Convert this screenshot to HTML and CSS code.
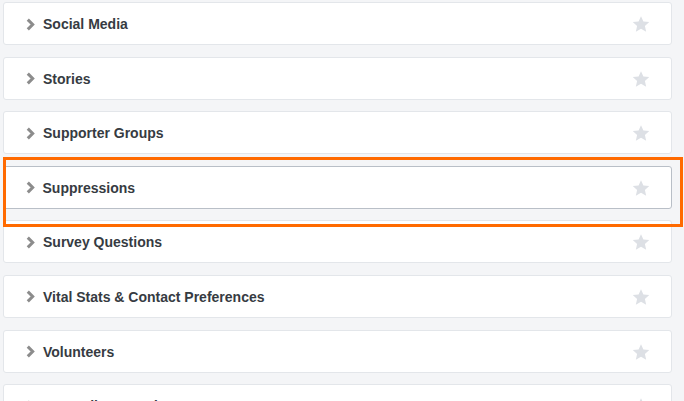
FILE: index.html
```html
<!DOCTYPE html>
<html>
<head>
<meta charset="utf-8">
<link rel="stylesheet" href="styles.css">
</head>
<body>
<div class="list">
  <div class="card"><svg class="chev" viewBox="0 0 8 12"><polyline points="1.5,1.5 6,6 1.5,10.5"/></svg><span class="label">Social Media</span><svg class="star" viewBox="0 0 24 24"><path d="M12 1.5l3.2 7.1 7.8.8-5.8 5.2 1.7 7.7L12 18.4l-6.9 3.9 1.7-7.7L1 9.4l7.8-.8z"/></svg></div>
  <div class="card"><svg class="chev" viewBox="0 0 8 12"><polyline points="1.5,1.5 6,6 1.5,10.5"/></svg><span class="label">Stories</span><svg class="star" viewBox="0 0 24 24"><path d="M12 1.5l3.2 7.1 7.8.8-5.8 5.2 1.7 7.7L12 18.4l-6.9 3.9 1.7-7.7L1 9.4l7.8-.8z"/></svg></div>
  <div class="card"><svg class="chev" viewBox="0 0 8 12"><polyline points="1.5,1.5 6,6 1.5,10.5"/></svg><span class="label">Supporter Groups</span><svg class="star" viewBox="0 0 24 24"><path d="M12 1.5l3.2 7.1 7.8.8-5.8 5.2 1.7 7.7L12 18.4l-6.9 3.9 1.7-7.7L1 9.4l7.8-.8z"/></svg></div>
  <div class="card selected"><svg class="chev" viewBox="0 0 8 12"><polyline points="1.5,1.5 6,6 1.5,10.5"/></svg><span class="label">Suppressions</span><svg class="star" viewBox="0 0 24 24"><path d="M12 1.5l3.2 7.1 7.8.8-5.8 5.2 1.7 7.7L12 18.4l-6.9 3.9 1.7-7.7L1 9.4l7.8-.8z"/></svg></div>
  <div class="card"><svg class="chev" viewBox="0 0 8 12"><polyline points="1.5,1.5 6,6 1.5,10.5"/></svg><span class="label">Survey Questions</span><svg class="star" viewBox="0 0 24 24"><path d="M12 1.5l3.2 7.1 7.8.8-5.8 5.2 1.7 7.7L12 18.4l-6.9 3.9 1.7-7.7L1 9.4l7.8-.8z"/></svg></div>
  <div class="card"><svg class="chev" viewBox="0 0 8 12"><polyline points="1.5,1.5 6,6 1.5,10.5"/></svg><span class="label">Vital Stats &amp; Contact Preferences</span><svg class="star" viewBox="0 0 24 24"><path d="M12 1.5l3.2 7.1 7.8.8-5.8 5.2 1.7 7.7L12 18.4l-6.9 3.9 1.7-7.7L1 9.4l7.8-.8z"/></svg></div>
  <div class="card"><svg class="chev" viewBox="0 0 8 12"><polyline points="1.5,1.5 6,6 1.5,10.5"/></svg><span class="label">Volunteers</span><svg class="star" viewBox="0 0 24 24"><path d="M12 1.5l3.2 7.1 7.8.8-5.8 5.2 1.7 7.7L12 18.4l-6.9 3.9 1.7-7.7L1 9.4l7.8-.8z"/></svg></div>
  <div class="card"><svg class="chev" viewBox="0 0 8 12"><polyline points="1.5,1.5 6,6 1.5,10.5"/></svg><span class="label">Voter File Records</span><svg class="star" viewBox="0 0 24 24"><path d="M12 1.5l3.2 7.1 7.8.8-5.8 5.2 1.7 7.7L12 18.4l-6.9 3.9 1.7-7.7L1 9.4l7.8-.8z"/></svg></div>
</div>
<div class="highlight"></div>
</body>
</html>
```
FILE: styles.css
```css
html, body {
  margin: 0;
  padding: 0;
  background: #f4f5f7;
  height: 401px;
  overflow: hidden;
}
body {
  position: relative;
  font-family: "Liberation Sans", Arial, sans-serif;
}
.list {
  display: flex;
  flex-direction: column;
  gap: 11.6px;
  padding: 2px 12px 0 3px;
}
.card {
  flex: none;
  box-sizing: border-box;
  height: 43px;
  background: #ffffff;
  border: 1px solid #e3e6ea;
  border-radius: 3px;
  display: flex;
  align-items: center;
  padding: 1px 21px 0 22px;
}
.card.selected {
  border: 1.5px solid #b9bfc7;
  padding-left: 21.5px;
}
.chev {
  width: 9px;
  height: 13px;
  flex: none;
  margin-right: 8px;
}
.chev polyline {
  fill: none;
  stroke: #8c8c8c;
  stroke-width: 2.8;
  stroke-linecap: butt;
  stroke-linejoin: miter;
}
.label {
  flex: 1;
  font-size: 14px;
  font-weight: bold;
  color: #363b42;
  white-space: nowrap;
}
.star {
  width: 18px;
  height: 18px;
  flex: none;
}
.star path {
  fill: #dde0e5;
}
.highlight {
  position: absolute;
  left: 3px;
  top: 157px;
  width: 680px;
  height: 70px;
  box-sizing: border-box;
  border: 3px solid #ff6a00;
}
```
